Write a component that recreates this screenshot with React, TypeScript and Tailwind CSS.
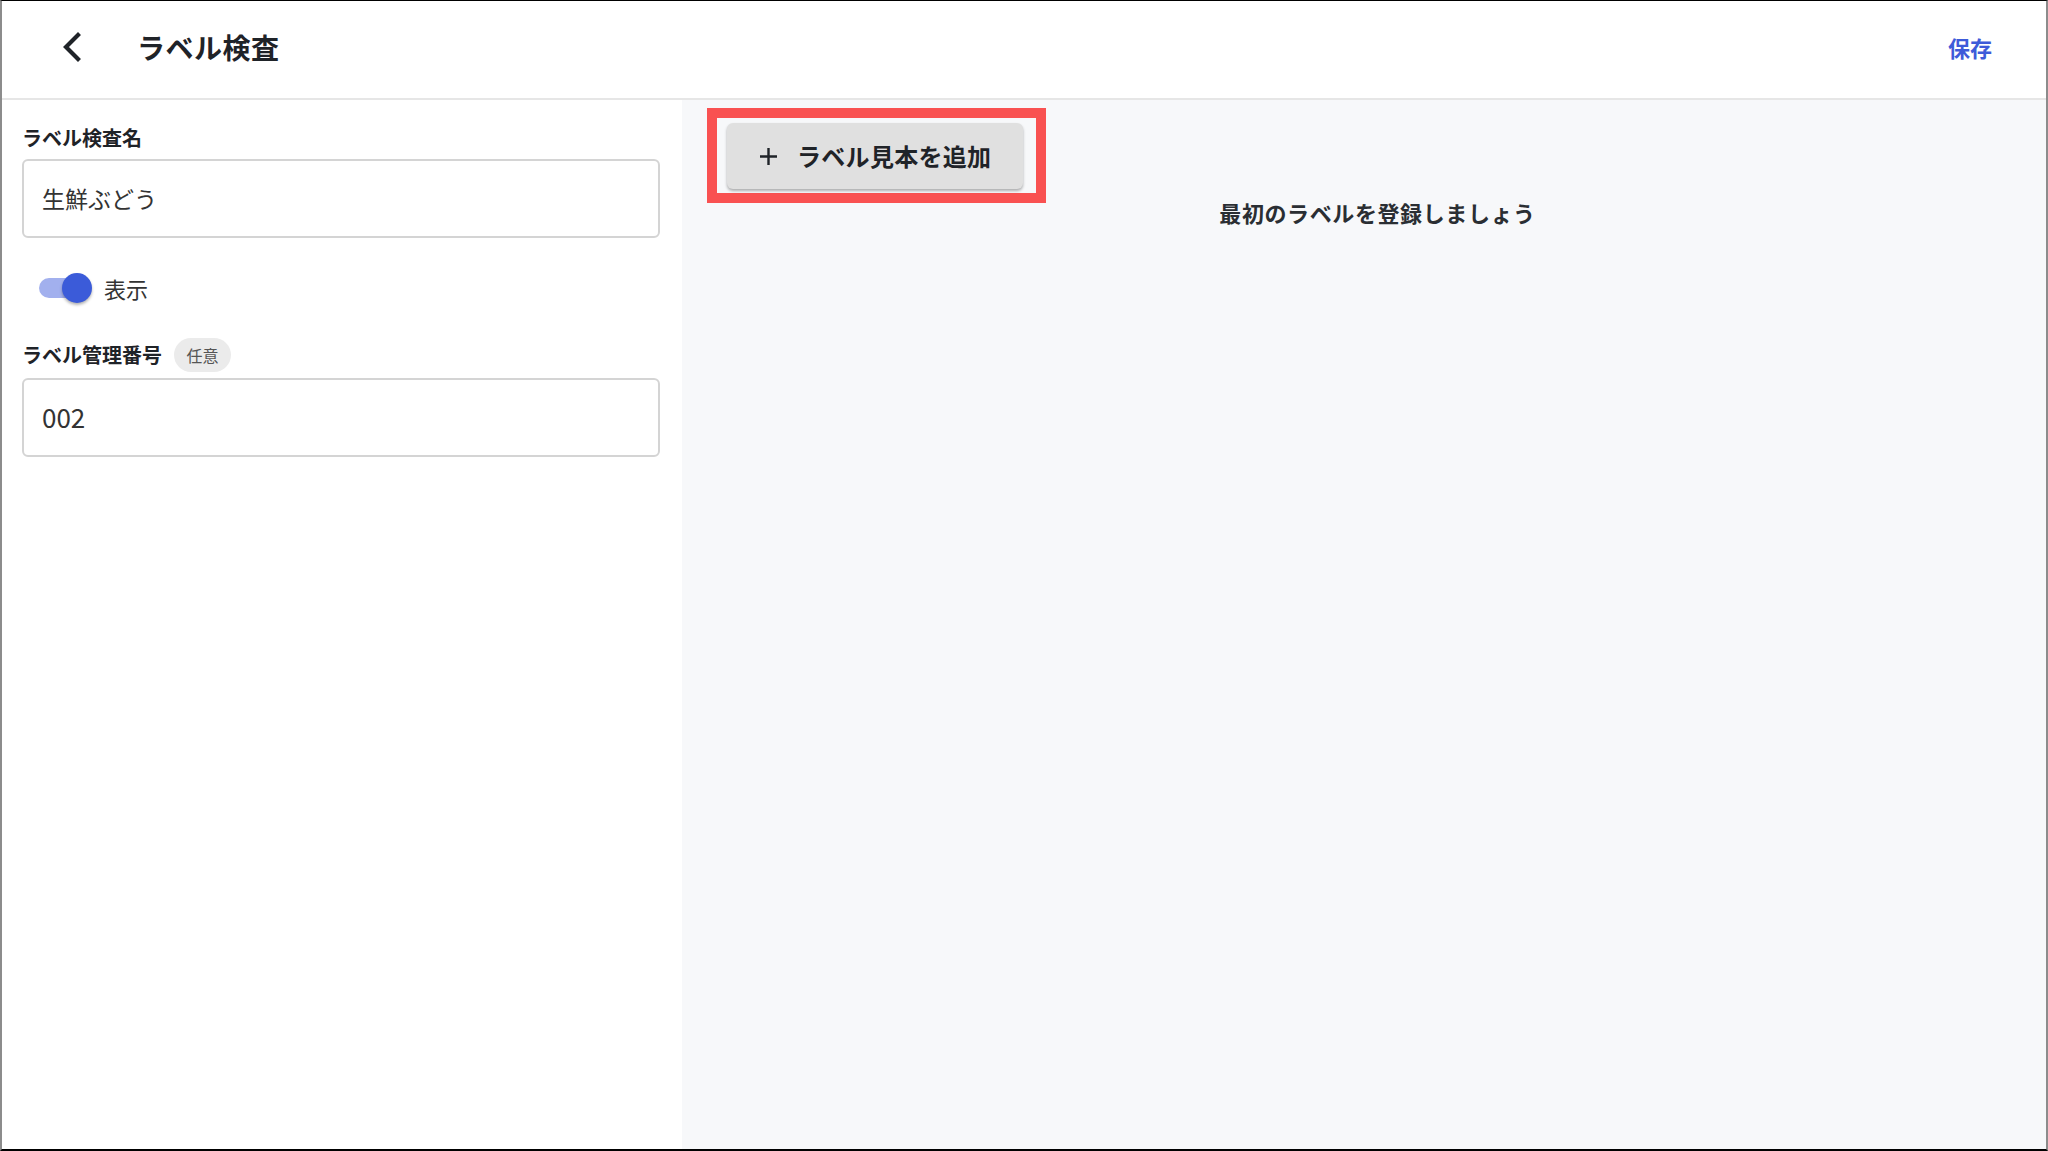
import React from "react";

export default function App() {
  return (
    <div className="w-[2048px] h-[1151px] box-border flex flex-col bg-white border-t border-t-black border-b-2 border-b-black border-l-2 border-l-[#8c8c8c] border-r-2 border-r-[#8c8c8c] font-['Noto_Sans_CJK_JP','Noto_Sans',sans-serif] text-[#1f2328] overflow-hidden">
      {/* Header */}
      <header className="h-[99px] shrink-0 box-border border-b-2 border-b-[#e6e6e6] flex items-center pb-[5px] pl-[57px] pr-[54px]">
        <button className="w-[26px] h-[32px] flex items-center justify-center">
          <svg width="22" height="30" viewBox="0 0 22 30" fill="none">
            <path d="M17 3 L5 15 L17 27" stroke="#1f2328" strokeWidth="4.2" strokeLinecap="square" strokeLinejoin="miter" />
          </svg>
        </button>
        <h1 className="ml-[52px] text-[28px] leading-[40px] font-bold tracking-[0.5px]">ラベル検査</h1>
        <div className="flex-1" />
        <button className="text-[22px] leading-[32px] font-bold text-[#3d5bd9]">保存</button>
      </header>

      {/* Body */}
      <div className="flex flex-1 min-h-0">
        {/* Left panel */}
        <div className="w-[680px] shrink-0 bg-white pl-[20px] pr-[22px] pt-[24px] flex flex-col">
          <label className="text-[20px] leading-[28px] font-bold">ラベル検査名</label>
          <div className="mt-[7px] h-[79px] box-border border-2 border-[#d4d4d4] rounded-[6px] flex items-center pl-[18px] text-[23px] text-[#333]">
            生鮮ぶどう
          </div>

          <div className="mt-[35px] h-[30px] flex items-center pl-[17px]">
            <div className="relative w-[53px] h-[30px] flex items-center">
              <div className="w-[48px] h-[20px] rounded-full bg-[#a2b0ee]" />
              <div className="absolute right-0 top-0 w-[30px] h-[30px] rounded-full bg-[#3b5bd9] shadow-[0_2px_3px_rgba(0,0,0,0.3)]" />
            </div>
            <span className="ml-[12px] text-[22px] leading-[30px] text-[#333]">表示</span>
          </div>

          <div className="mt-[35px] h-[34px] flex items-center">
            <label className="text-[20px] leading-[28px] font-bold">ラベル管理番号</label>
            <span className="ml-[12px] h-[34px] w-[57px] rounded-full bg-[#ebebeb] flex items-center justify-center text-[16px] text-[#555]">
              任意
            </span>
          </div>
          <div className="mt-[6px] h-[79px] box-border border-2 border-[#d4d4d4] rounded-[6px] flex items-center pl-[18px] pb-[2px] text-[26px] text-[#333]">
            002
          </div>
        </div>

        {/* Right panel */}
        <div className="flex-1 bg-[#f7f8fa] pt-[8px] pl-[25px] flex flex-col">
          <div className="w-[339px] h-[95px] box-border border-[10px] border-[#f95151] pl-[10px] pt-[5px]">
            <button className="w-[296px] h-[66px] rounded-[6px] bg-[#e0e0e0] shadow-[0_2px_3px_rgba(0,0,0,0.3)] flex items-center pl-[32px]">
              <svg width="19" height="19" viewBox="0 0 19 19" fill="none">
                <path d="M9.5 1 V18 M1 9.5 H18" stroke="#1f2328" strokeWidth="2.4" />
              </svg>
              <span className="ml-[19px] text-[24px] leading-[32px] font-bold tracking-[0.3px]">ラベル見本を追加</span>
            </button>
          </div>
          <p className="-mt-[7px] pl-[2px] text-center text-[22px] leading-[32px] font-bold text-[#2a2e33] tracking-[0.6px]">
            最初のラベルを登録しましょう
          </p>
        </div>
      </div>
    </div>
  );
}
